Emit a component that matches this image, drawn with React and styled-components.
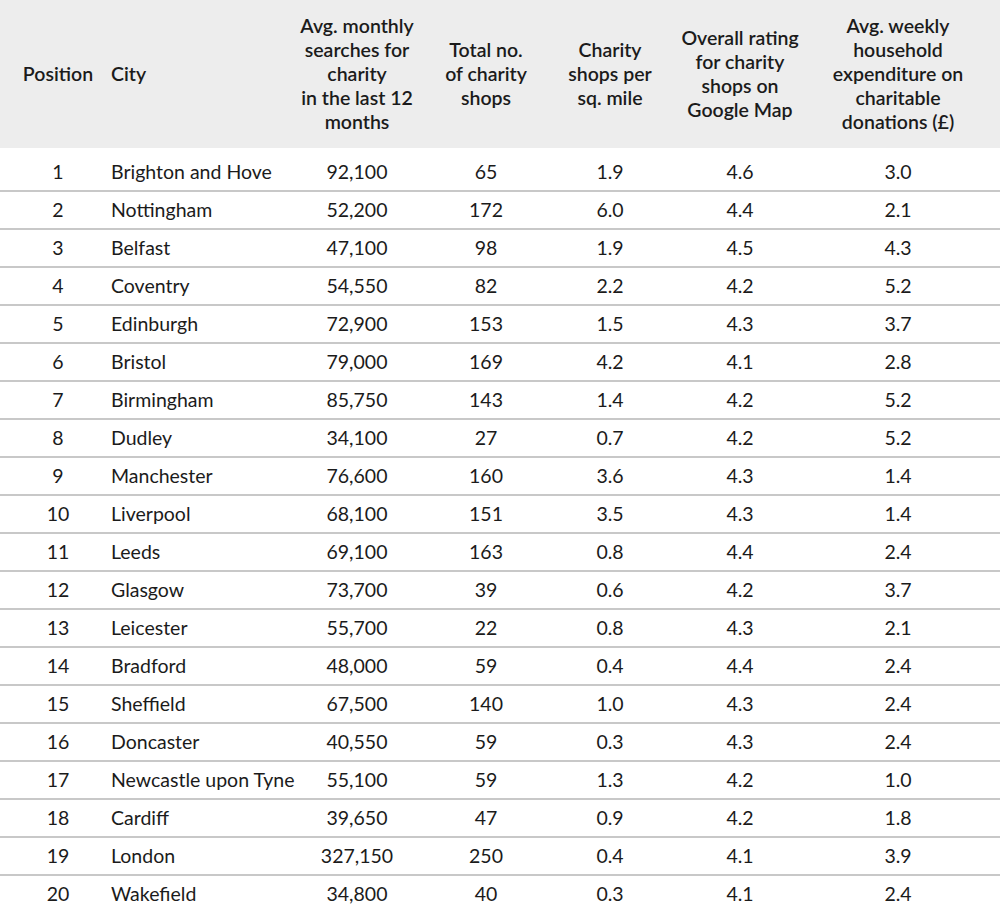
import React from 'react';
import styled, { createGlobalStyle } from 'styled-components';

const GlobalStyle = createGlobalStyle`
  html, body {
    margin: 0;
    padding: 0;
    background: #ffffff;
  }
  body {
    font-family: Lato, 'Noto Sans', sans-serif;
    color: #1b1b1b;
  }
`;

const COLUMNS = '106px 194px 114px 144px 104px 156px 160px 1fr';

const Table = styled.div`
  width: 100%;
`;

const HeadRow = styled.div`
  display: grid;
  grid-template-columns: ${COLUMNS};
  align-items: center;
  height: 148px;
  background: #ededed;
  margin-bottom: 6px;
`;

const HeadCell = styled.div`
  font-size: 19.5px;
  font-weight: 600;
  line-height: 24px;
  white-space: nowrap;
  text-align: ${(props) => (props.left ? 'left' : 'center')};
  padding-left: ${(props) => props.pad || 0}px;
`;

const Row = styled.div`
  display: grid;
  grid-template-columns: ${COLUMNS};
  align-items: center;
  height: 36px;
  border-bottom: 2px solid #c8c8c8;
`;

const Cell = styled.div`
  font-size: 19.5px;
  line-height: 36px;
  text-align: ${(props) => (props.left ? 'left' : 'center')};
  padding-left: ${(props) => props.pad || 0}px;
  white-space: nowrap;
`;

const rows = [
  [1, 'Brighton and Hove', '92,100', 65, '1.9', '4.6', '3.0'],
  [2, 'Nottingham', '52,200', 172, '6.0', '4.4', '2.1'],
  [3, 'Belfast', '47,100', 98, '1.9', '4.5', '4.3'],
  [4, 'Coventry', '54,550', 82, '2.2', '4.2', '5.2'],
  [5, 'Edinburgh', '72,900', 153, '1.5', '4.3', '3.7'],
  [6, 'Bristol', '79,000', 169, '4.2', '4.1', '2.8'],
  [7, 'Birmingham', '85,750', 143, '1.4', '4.2', '5.2'],
  [8, 'Dudley', '34,100', 27, '0.7', '4.2', '5.2'],
  [9, 'Manchester', '76,600', 160, '3.6', '4.3', '1.4'],
  [10, 'Liverpool', '68,100', 151, '3.5', '4.3', '1.4'],
  [11, 'Leeds', '69,100', 163, '0.8', '4.4', '2.4'],
  [12, 'Glasgow', '73,700', 39, '0.6', '4.2', '3.7'],
  [13, 'Leicester', '55,700', 22, '0.8', '4.3', '2.1'],
  [14, 'Bradford', '48,000', 59, '0.4', '4.4', '2.4'],
  [15, 'Sheffield', '67,500', 140, '1.0', '4.3', '2.4'],
  [16, 'Doncaster', '40,550', 59, '0.3', '4.3', '2.4'],
  [17, 'Newcastle upon Tyne', '55,100', 59, '1.3', '4.2', '1.0'],
  [18, 'Cardiff', '39,650', 47, '0.9', '4.2', '1.8'],
  [19, 'London', '327,150', 250, '0.4', '4.1', '3.9'],
  [20, 'Wakefield', '34,800', 40, '0.3', '4.1', '2.4'],
];

const App = () => {
  return (
    <>
      <GlobalStyle />
      <Table>
        <HeadRow>
          <HeadCell pad={10}>Position</HeadCell>
          <HeadCell left pad={5}>City</HeadCell>
          <HeadCell>
            Avg. monthly<br />searches for<br />charity<br />in the last 12<br />months
          </HeadCell>
          <HeadCell>
            Total no.<br />of charity<br />shops
          </HeadCell>
          <HeadCell>
            Charity<br />shops per<br />sq. mile
          </HeadCell>
          <HeadCell>
            Overall rating<br />for charity<br />shops on<br />Google Map
          </HeadCell>
          <HeadCell>
            Avg. weekly<br />household<br />expenditure on<br />charitable<br />donations (£)
          </HeadCell>
          <div />
        </HeadRow>
        {rows.map((r) => (
          <Row key={r[0]}>
            <Cell pad={10}>{r[0]}</Cell>
            <Cell left pad={5}>{r[1]}</Cell>
            <Cell>{r[2]}</Cell>
            <Cell>{r[3]}</Cell>
            <Cell>{r[4]}</Cell>
            <Cell>{r[5]}</Cell>
            <Cell>{r[6]}</Cell>
            <div />
          </Row>
        ))}
      </Table>
    </>
  );
};

export default App;
